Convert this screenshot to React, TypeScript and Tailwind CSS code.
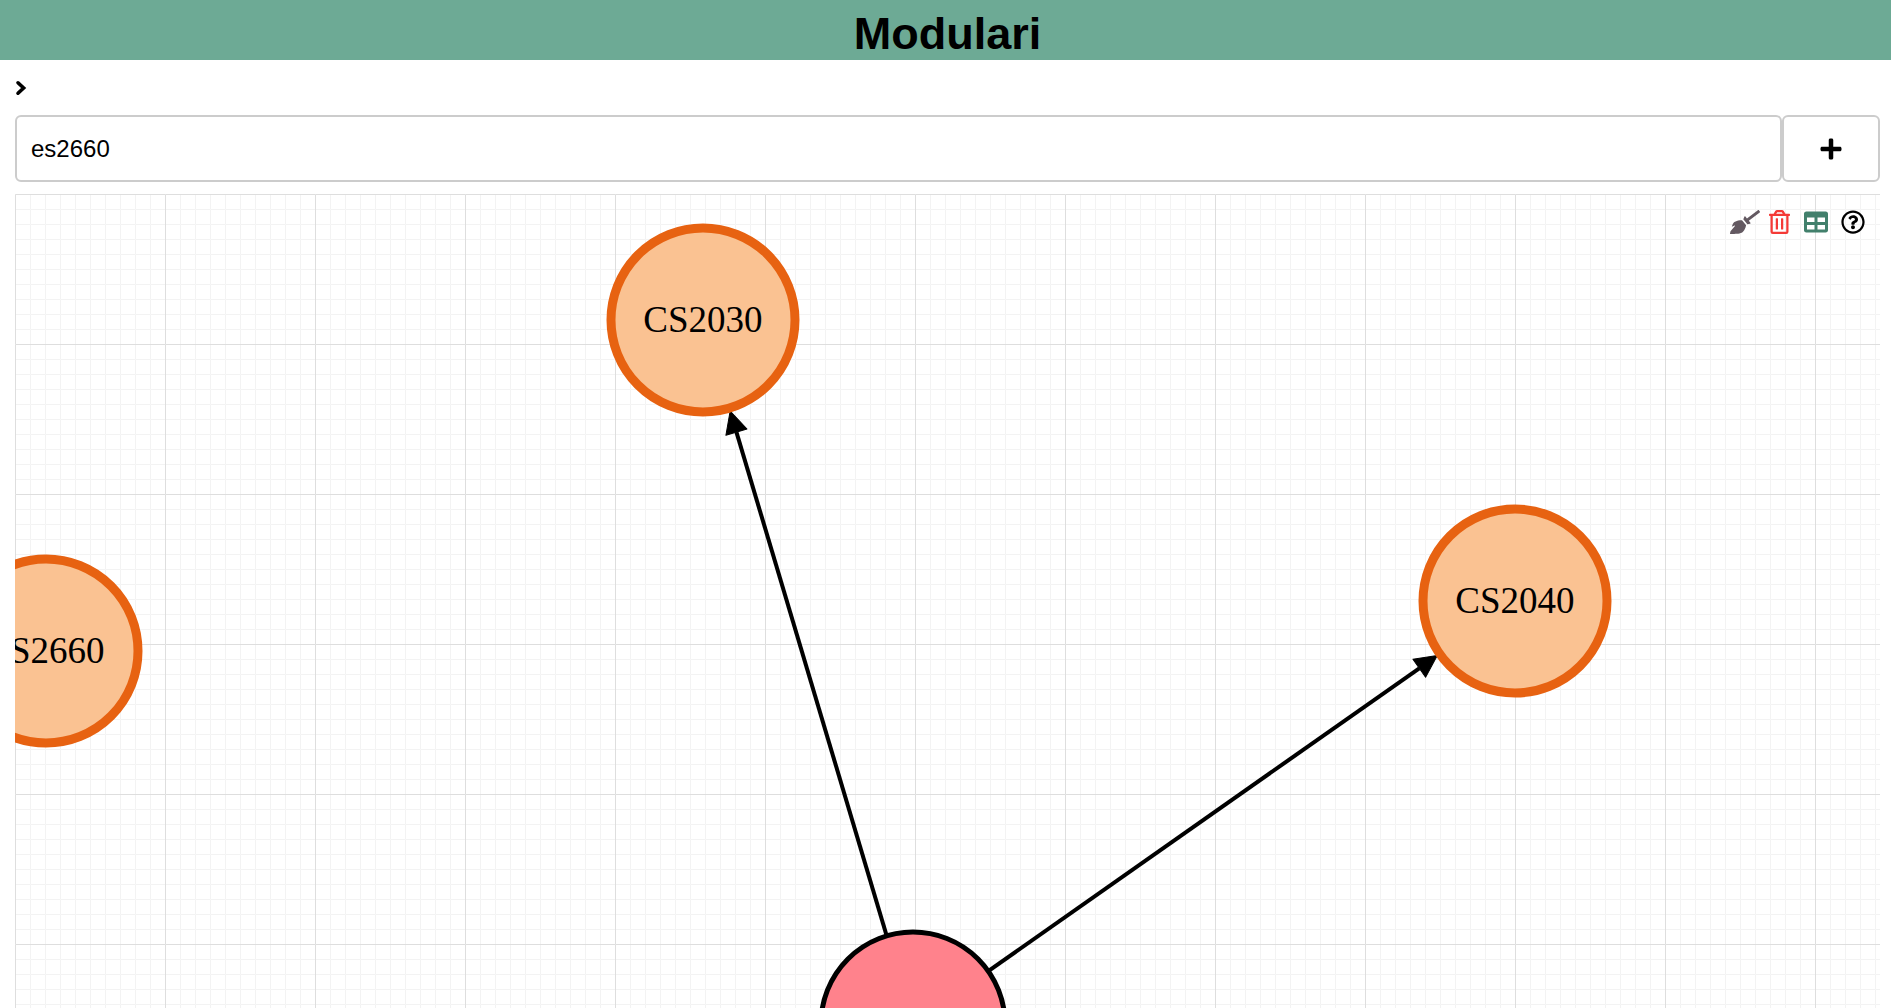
import { useState } from "react";
import { FaBroom, FaPlus, FaRegQuestionCircle, FaRegTrashAlt, FaTable } from "react-icons/fa";

type Module = {
  code?: string;
  x: number;
  y: number;
  fill: string;
  stroke: string;
  strokeWidth: number;
};

const RADIUS = 92;

const root: Module = { x: 898, y: 830, fill: "#ff828c", stroke: "#000000", strokeWidth: 5 };

const modules: Module[] = [
  { code: "CS2030", x: 688, y: 126, fill: "#fac292", stroke: "#e76211", strokeWidth: 9 },
  { code: "CS2040", x: 1500, y: 407, fill: "#fac292", stroke: "#e76211", strokeWidth: 9 },
  { code: "ES2660", x: 31, y: 457, fill: "#fac292", stroke: "#e76211", strokeWidth: 9 },
];

const edges: [Module, Module][] = [
  [root, modules[0]],
  [root, modules[1]],
];

function Edge({ from, to }: { from: Module; to: Module }) {
  const length = Math.hypot(to.x - from.x, to.y - from.y);
  const ux = (to.x - from.x) / length;
  const uy = (to.y - from.y) / length;
  const reach = RADIUS + 25;
  return (
    <line
      x1={from.x}
      y1={from.y}
      x2={to.x - ux * reach}
      y2={to.y - uy * reach}
      stroke="#000"
      strokeWidth="4"
      markerEnd="url(#arrow)"
    />
  );
}

function Node({ module }: { module: Module }) {
  return (
    <g>
      <circle
        cx={module.x}
        cy={module.y}
        r={RADIUS}
        fill={module.fill}
        stroke={module.stroke}
        strokeWidth={module.strokeWidth}
      />
      {module.code && (
        <text
          x={module.x}
          y={module.y + 12}
          textAnchor="middle"
          className="font-['Liberation_Serif',serif] text-[37px]"
        >
          {module.code}
        </text>
      )}
    </g>
  );
}

function Graph() {
  return (
    <svg className="block size-full" role="img" aria-label="Module prerequisite graph">
      <defs>
        <pattern id="minor" width="15" height="15" patternUnits="userSpaceOnUse">
          <path d="M15 .5H.5V15" fill="none" stroke="#f3f3f3" />
        </pattern>
        <pattern id="major" width="150" height="150" patternUnits="userSpaceOnUse">
          <rect width="150" height="150" fill="url(#minor)" />
          <path d="M150 .5H.5V150" fill="none" stroke="#dedede" />
        </pattern>
        <marker
          id="arrow"
          markerUnits="userSpaceOnUse"
          markerWidth="24"
          markerHeight="24"
          refX="1"
          refY="12"
          orient="auto"
        >
          <path d="M1 1L23 12L1 23Z" stroke="#000" strokeLinejoin="round" />
        </marker>
      </defs>
      <rect width="100%" height="100%" fill="url(#major)" />
      {edges.map(([from, to]) => (
        <Edge key={to.code} from={from} to={to} />
      ))}
      {[root, ...modules].map((module) => (
        <Node key={module.code ?? "root"} module={module} />
      ))}
    </svg>
  );
}

export default function App() {
  const [query, setQuery] = useState("es2660");

  return (
    <div className="flex h-screen flex-col overflow-hidden bg-white font-['Liberation_Sans',Arial,sans-serif] text-black">
      <header className="flex h-15 shrink-0 items-center justify-center bg-[#6daa95] pt-1.5 pl-1">
        <h1 className="text-[45px] leading-none font-bold">Modulari</h1>
      </header>

      <main className="flex min-h-0 flex-1 flex-col pr-[11px] pl-[15px]">
        <div className="flex h-[55px] shrink-0 items-center">
          <button type="button" aria-label="Open sidebar" className="flex h-6 items-center">
            <svg viewBox="0 0 12 16" className="h-4 w-3" aria-hidden="true">
              <path
                d="M3 2.8L8.6 8L3 13.2"
                fill="none"
                stroke="currentColor"
                strokeWidth="3.6"
                strokeLinecap="round"
                strokeLinejoin="miter"
              />
            </svg>
          </button>
        </div>

        <form className="flex h-[67px] shrink-0" onSubmit={(e) => e.preventDefault()}>
          <input
            type="text"
            aria-label="Module code"
            value={query}
            onChange={(e) => setQuery(e.target.value)}
            className="min-w-0 flex-1 rounded-md border-2 border-[#cccccc] px-3.5 text-2xl outline-none"
          />
          <button
            type="submit"
            aria-label="Add module"
            className="flex w-[98px] items-center justify-center rounded-md border-2 border-[#cccccc]"
          >
            <FaPlus className="size-6" />
          </button>
        </form>

        <section className="relative mt-3 min-h-0 flex-1 overflow-hidden">
          <Graph />
          <div className="absolute top-4 right-[15px] flex items-center gap-[13px]">
            <div className="flex items-center gap-[9px] pr-px">
              <button type="button" aria-label="Tidy up graph" className="text-[#635961]">
                <FaBroom className="h-6 w-[30px]" />
              </button>
              <button type="button" aria-label="Delete module" className="text-[#f43a36]">
                <FaRegTrashAlt className="h-6 w-[21px]" />
              </button>
            </div>
            <button type="button" aria-label="Show table" className="text-[#42806c]">
              <FaTable className="size-6" />
            </button>
            <button type="button" aria-label="Help">
              <FaRegQuestionCircle className="size-6" />
            </button>
          </div>
        </section>
      </main>
    </div>
  );
}
